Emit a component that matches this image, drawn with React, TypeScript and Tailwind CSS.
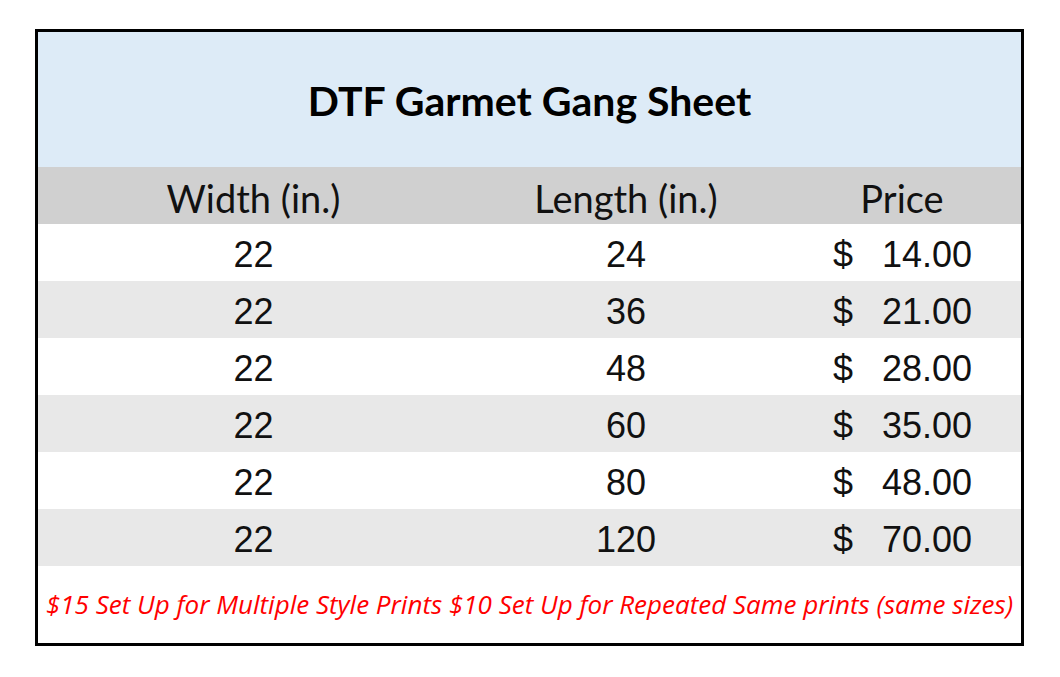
import React from 'react';

const rows = [
  { width: '22', length: '24', price: '14.00' },
  { width: '22', length: '36', price: '21.00' },
  { width: '22', length: '48', price: '28.00' },
  { width: '22', length: '60', price: '35.00' },
  { width: '22', length: '80', price: '48.00' },
  { width: '22', length: '120', price: '70.00' },
];

const App = () => {
  return (
    <div className="min-h-screen bg-white pt-[29px] pl-[35px]">
      <div className="w-[989px] border-[3px] border-black">
        <div className="h-[135px] bg-[#ddebf7] flex items-center justify-center">
          <h1 className="font-['Lato',sans-serif] font-bold text-[41px] text-black pt-[2px]">DTF Garmet Gang Sheet</h1>
        </div>

        <div className="h-[57px] bg-[#d0d0d0] grid grid-cols-[431px_314px_238px] items-center text-center font-['Lato',sans-serif] text-[38px] text-[#111] pt-[3px]">
          <div>Width (in.)</div>
          <div>Length (in.)</div>
          <div>Price</div>
        </div>

        {rows.map((row, i) => (
          <div
            key={i}
            className={`h-[57px] grid grid-cols-[431px_314px_238px] items-center font-['Liberation_Sans',Arial,sans-serif] text-[36px] text-[#111] ${i % 2 === 1 ? 'bg-[#e8e8e8]' : 'bg-white'}`}
          >
            <div className="text-center pt-[4px]">{row.width}</div>
            <div className="text-center pt-[4px]">{row.length}</div>
            <div className="flex justify-between pl-[50px] pr-[49px] pt-[4px]">
              <span>$</span>
              <span>{row.price}</span>
            </div>
          </div>
        ))}

        <div className="h-[77px] flex items-center justify-center">
          <p className="font-['Open_Sans',sans-serif] italic text-[26px] text-[#ff0000] whitespace-nowrap">
            $15 Set Up for Multiple Style Prints $10 Set Up for Repeated Same prints (same sizes)
          </p>
        </div>
      </div>
    </div>
  );
};

export default App;
